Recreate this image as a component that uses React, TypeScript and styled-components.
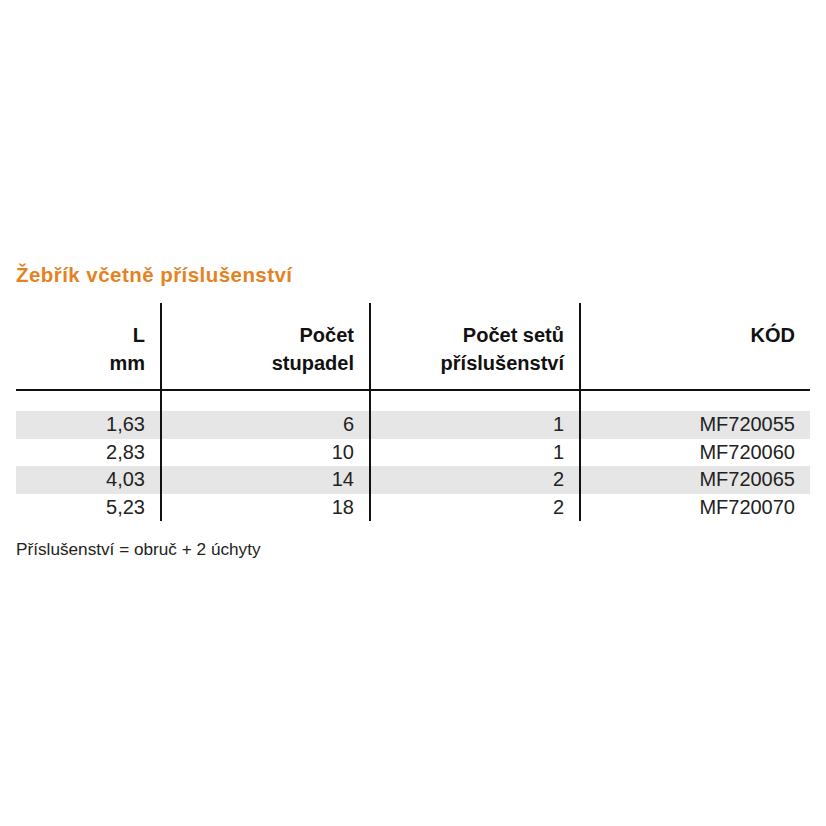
import React from 'react';
import styled, { createGlobalStyle } from 'styled-components';

const GlobalStyle = createGlobalStyle`
  html, body {
    margin: 0;
    padding: 0;
    background: #ffffff;
  }
  body {
    font-family: "Liberation Sans", Arial, Helvetica, sans-serif;
    color: #1c1c1c;
  }
`;

const Page = styled.div`
  width: 826px;
  height: 826px;
  box-sizing: border-box;
  padding: 263px 16px 0 16px;
  display: flex;
  flex-direction: column;
`;

const Title = styled.h2`
  margin: 0 0 16px 0;
  font-size: 20.5px;
  line-height: 24px;
  font-weight: 700;
  letter-spacing: 0.45px;
  color: #e5821f;
`;

const Table = styled.table`
  width: 794px;
  border-collapse: collapse;
  table-layout: fixed;
`;

const rule = '2px solid #111';

const HeadCell = styled.th<{ $last?: boolean }>`
  padding: 18px 15px 12px 0;
  text-align: right;
  vertical-align: top;
  font-size: 20px;
  line-height: 28px;
  font-weight: 700;
  color: #111;
  border-bottom: ${rule};
  border-right: ${(p) => (p.$last ? 'none' : rule)};
`;

const SpacerCell = styled.td<{ $last?: boolean }>`
  height: 20px;
  padding: 0;
  border-right: ${(p) => (p.$last ? 'none' : rule)};
`;

const Row = styled.tr<{ $shaded: boolean }>`
  background: ${(p) => (p.$shaded ? '#e6e6e6' : 'transparent')};
`;

const Cell = styled.td<{ $last?: boolean }>`
  height: 27.5px;
  padding: 0 15px 0 0;
  text-align: right;
  font-size: 20px;
  line-height: 27.5px;
  color: #222;
  border-right: ${(p) => (p.$last ? 'none' : rule)};
`;

const Note = styled.p`
  margin: 18px 0 0 0;
  font-size: 17.2px;
  line-height: 20px;
  color: #222;
`;

const rows = [
  ['1,63', '6', '1', 'MF720055'],
  ['2,83', '10', '1', 'MF720060'],
  ['4,03', '14', '2', 'MF720065'],
  ['5,23', '18', '2', 'MF720070'],
];

const widths = [145, 209, 210, 230];

export default function App() {
  return (
    <>
      <GlobalStyle />
      <Page>
        <Title>Žebřík včetně příslušenství</Title>
        <Table>
          <colgroup>
            {widths.map((w, i) => (
              <col key={i} style={{ width: w }} />
            ))}
          </colgroup>
          <thead>
            <tr>
              <HeadCell>
                L<br />mm
              </HeadCell>
              <HeadCell>
                Počet<br />stupadel
              </HeadCell>
              <HeadCell>
                Počet setů<br />příslušenství
              </HeadCell>
              <HeadCell $last>KÓD</HeadCell>
            </tr>
          </thead>
          <tbody>
            <tr>
              <SpacerCell />
              <SpacerCell />
              <SpacerCell />
              <SpacerCell $last />
            </tr>
            {rows.map((r, i) => (
              <Row key={i} $shaded={i % 2 === 0}>
                {r.map((v, j) => (
                  <Cell key={j} $last={j === r.length - 1}>
                    {v}
                  </Cell>
                ))}
              </Row>
            ))}
          </tbody>
        </Table>
        <Note>Příslušenství = obruč + 2 úchyty</Note>
      </Page>
    </>
  );
}
